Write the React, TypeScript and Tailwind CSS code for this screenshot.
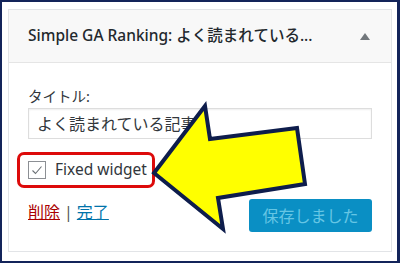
import React from "react";

const font = { fontFamily: '"Noto Sans", "Noto Sans CJK JP", sans-serif' };

const Arrow = () => (
  <svg
    className="absolute left-0 top-0 pointer-events-none"
    width="400"
    height="263"
    viewBox="0 0 400 263"
  >
    <polygon
      points="152,171 203,104 208,137 295,126 303,182 216,196 221,227"
      fill="#ffff00"
      stroke="#0e1d4c"
      strokeWidth="4"
      strokeLinejoin="miter"
    />
  </svg>
);

const Checkbox = () => (
  <span className="flex h-[18px] w-[18px] items-center justify-center border border-[#8c8f94] bg-white">
    <svg width="14" height="14" viewBox="0 0 14 14" fill="none">
      <path d="M2.5 7.5 L5.5 10.5 L11.5 3.5" stroke="#6b7075" strokeWidth="1.1" />
    </svg>
  </span>
);

export default function App() {
  return (
    <div
      className="relative h-[263px] w-[400px] overflow-hidden border-2 border-r-[3px] border-[#13245a] bg-white pl-[6px] pr-[5px] pt-[7px]"
      style={font}
    >
      <div className="border border-[#e2e4e7] bg-white">
        <div className="flex h-[53px] items-center justify-between border-b border-[#e5e5e5] bg-[#f8f8f8] pl-[19px] pr-[21px]">
          <h3 className="text-[15.5px] font-medium text-[#23282d]">
            Simple GA Ranking: よく読まれている...
          </h3>
          <span className="h-0 w-0 border-x-[5px] border-b-[7px] border-x-transparent border-b-[#72777c]" />
        </div>

        <div className="flex flex-col px-[19px] pb-[19px] pt-[23px]">
          <label className="text-[14.5px] leading-[20px] text-[#32373c]">タイトル:</label>
          <div className="mt-[2px] flex h-[31px] items-center border border-[#dddddd] bg-white pl-[8px] text-[16px] text-[#32373c] shadow-[inset_0_1px_2px_rgba(0,0,0,0.07)]">
            よく読まれている記事
          </div>

          <div className="-ml-[11px] mt-[13px] flex h-[36px] w-[138px] items-center gap-[9px] rounded-[7px] border-[3px] border-[#dd0a0a] pl-[8px]">
            <Checkbox />
            <span className="text-[15.5px] text-[#32373c]">Fixed widget</span>
          </div>

          <div className="mt-[11px] flex items-start justify-between">
            <div className="mt-[1px] flex items-center gap-[4px] text-[16px]">
              <a className="text-[#a00] underline">削除</a>
              <span className="text-[#555]">|</span>
              <a className="text-[#0073aa] underline">完了</a>
            </div>
            <button className="h-[33px] w-[123px] rounded-[3px] bg-[#0a8fc4] text-[16px] text-[#66c6e4]">
              保存しました
            </button>
          </div>
        </div>
      </div>
      <Arrow />
    </div>
  );
}
